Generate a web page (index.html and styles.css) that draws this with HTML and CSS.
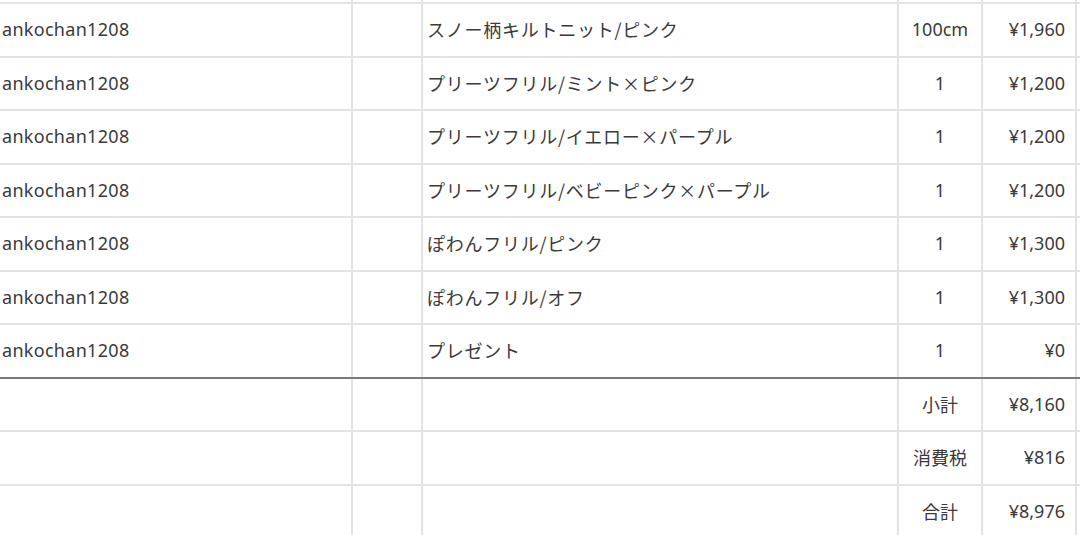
FILE: index.html
```html
<!DOCTYPE html>
<html lang="ja">
<head>
<meta charset="utf-8">
<link rel="stylesheet" href="styles.css">
</head>
<body>
<div class="sheet">
  <div class="row top"><div class="c"></div><div class="c"></div><div class="c"></div><div class="c"></div><div class="c"></div><div class="c end"></div></div>
  <div class="row"><div class="c name">ankochan1208</div><div class="c"></div><div class="c item">スノー柄キルトニット/ピンク</div><div class="c qty">100cm</div><div class="c price">¥1,960</div><div class="c end"></div></div>
  <div class="row"><div class="c name">ankochan1208</div><div class="c"></div><div class="c item">プリーツフリル/ミント×ピンク</div><div class="c qty">1</div><div class="c price">¥1,200</div><div class="c end"></div></div>
  <div class="row"><div class="c name">ankochan1208</div><div class="c"></div><div class="c item">プリーツフリル/イエロー×パープル</div><div class="c qty">1</div><div class="c price">¥1,200</div><div class="c end"></div></div>
  <div class="row"><div class="c name">ankochan1208</div><div class="c"></div><div class="c item">プリーツフリル/ベビーピンク×パープル</div><div class="c qty">1</div><div class="c price">¥1,200</div><div class="c end"></div></div>
  <div class="row"><div class="c name">ankochan1208</div><div class="c"></div><div class="c item">ぽわんフリル/ピンク</div><div class="c qty">1</div><div class="c price">¥1,300</div><div class="c end"></div></div>
  <div class="row"><div class="c name">ankochan1208</div><div class="c"></div><div class="c item">ぽわんフリル/オフ</div><div class="c qty">1</div><div class="c price">¥1,300</div><div class="c end"></div></div>
  <div class="row last"><div class="c name">ankochan1208</div><div class="c"></div><div class="c item">プレゼント</div><div class="c qty">1</div><div class="c price">¥0</div><div class="c end"></div></div>
  <div class="row"><div class="c name"></div><div class="c"></div><div class="c item"></div><div class="c qty">小計</div><div class="c price">¥8,160</div><div class="c end"></div></div>
  <div class="row"><div class="c name"></div><div class="c"></div><div class="c item"></div><div class="c qty">消費税</div><div class="c price">¥816</div><div class="c end"></div></div>
  <div class="row"><div class="c name"></div><div class="c"></div><div class="c item"></div><div class="c qty">合計</div><div class="c price">¥8,976</div><div class="c end"></div></div>
</div>
</body>
</html>
```

FILE: styles.css
```css
html, body {
  margin: 0;
  padding: 0;
  background: #ffffff;
}
body {
  width: 1080px;
  height: 535px;
  overflow: hidden;
  font-family: "Noto Sans", "Noto Sans CJK JP", sans-serif;
  font-size: 18px;
  color: #3a3a3a;
}
.sheet {
  display: flex;
  flex-direction: column;
}
.row {
  display: grid;
  grid-template-columns: 353px 70px 476px 84px 94px 3px;
  height: 53.5px;
  box-sizing: border-box;
  border-bottom: 2px solid #e3e3e3;
}
.row.top {
  height: 4px;
}
.row.last {
  border-bottom-color: #7a7a7a;
}
.c {
  box-sizing: border-box;
  border-right: 2px solid #e3e3e3;
  display: flex;
  align-items: center;
  white-space: nowrap;
  overflow: hidden;
  padding-bottom: 1px;
}
.c.end {
  border-right: none;
}
.name {
  padding-left: 2px;
  letter-spacing: 0.3px;
}
.item {
  padding-left: 4px;
  letter-spacing: 0.75px;
  font-family: "Noto Sans CJK JP", sans-serif;
}
.qty {
  justify-content: center;
}
.price {
  justify-content: flex-end;
  padding-right: 10px;
}
```
